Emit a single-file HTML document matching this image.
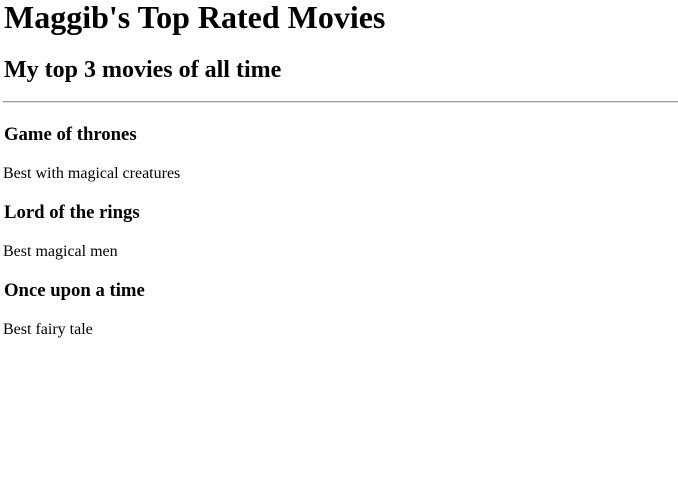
<!DOCTYPE html>
<html><head><meta charset="utf-8"><style>
body{margin:0;width:678px;height:488px;background:#fff;font-family:"Liberation Serif",serif;color:#000;position:relative;overflow:hidden}
.a{position:absolute;left:4px;margin:0;white-space:nowrap}
h1.a{font-size:32px;line-height:32px;font-weight:bold}
h2.a{font-size:24px;line-height:24px;font-weight:bold}
h3.a{font-size:18.72px;line-height:18.72px;font-weight:bold}
p.a{font-size:16px;line-height:16px;left:3px}
.hr{position:absolute;left:3px;right:0;top:101px;height:1px;background:#9a9a9a;border-bottom:1px solid #e0e0e0}
</style></head><body>
<h1 class="a" style="top:1px">Maggib's Top Rated Movies</h1>
<h2 class="a" style="top:58px">My top 3 movies of all time</h2>
<div class="hr"></div>
<h3 class="a" style="top:126px">Game of thrones</h3>
<p class="a" style="top:166px">Best with magical creatures</p>
<h3 class="a" style="top:204px">Lord of the rings</h3>
<p class="a" style="top:244px">Best magical men</p>
<h3 class="a" style="top:282px">Once upon a time</h3>
<p class="a" style="top:322px">Best fairy tale</p>
</body></html>
